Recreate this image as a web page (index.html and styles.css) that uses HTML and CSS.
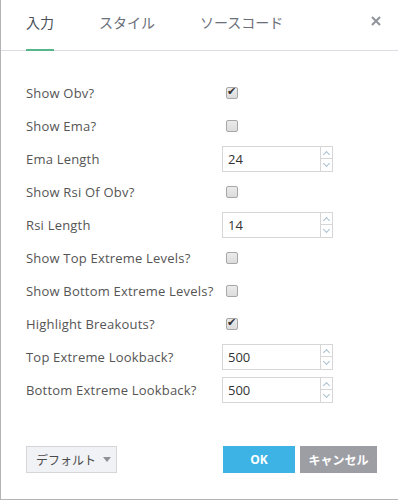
FILE: index.html
```html
<!doctype html>
<html lang="ja">
<head>
	<meta charset="UTF-8">
	<title>設定</title>
	<link rel="stylesheet" href="styles.css">
</head>
<body>
	<div class="dialog">
		<div class="tabs">
			<span class="tab active">入力</span>
			<span class="tab">スタイル</span>
			<span class="tab">ソースコード</span>
			<span class="close">
				<svg width="10" height="10" viewBox="0 0 10 10"><path d="M1 1L9 9M9 1L1 9" stroke="#8f939c" stroke-width="2"/></svg>
			</span>
		</div>

		<div class="content">
			<div class="row"><label>Show Obv?</label><span class="check on"></span></div>
			<div class="row"><label>Show Ema?</label><span class="check"></span></div>
			<div class="row"><label>Ema Length</label>
				<div class="num"><span class="val">24</span><span class="spin"><i class="up"></i><i class="down"></i></span></div>
			</div>
			<div class="row"><label>Show Rsi Of Obv?</label><span class="check"></span></div>
			<div class="row"><label>Rsi Length</label>
				<div class="num"><span class="val">14</span><span class="spin"><i class="up"></i><i class="down"></i></span></div>
			</div>
			<div class="row"><label>Show Top Extreme Levels?</label><span class="check"></span></div>
			<div class="row"><label>Show Bottom Extreme Levels?</label><span class="check"></span></div>
			<div class="row"><label>Highlight Breakouts?</label><span class="check on"></span></div>
			<div class="row"><label>Top Extreme Lookback?</label>
				<div class="num"><span class="val">500</span><span class="spin"><i class="up"></i><i class="down"></i></span></div>
			</div>
			<div class="row"><label>Bottom Extreme Lookback?</label>
				<div class="num"><span class="val">500</span><span class="spin"><i class="up"></i><i class="down"></i></span></div>
			</div>
		</div>

		<div class="footer">
			<a href="javascript:;" class="btn default">デフォルト<span class="caret"></span></a>
			<div class="actions">
				<a href="javascript:;" class="btn ok">OK</a>
				<a href="javascript:;" class="btn cancel">キャンセル</a>
			</div>
		</div>
	</div>
</body>
</html>
```

FILE: styles.css
```css
body{margin: 0;background-color: #fff;}
a{text-decoration: none;}
.dialog{
	width: 397px;
	height: 499px;
	border-left: 1px solid #b4b4b4;
	border-bottom: 1px solid #b4b4b4;
	background-color: #fff;
	font: 13px 'Open Sans', 'Noto Sans CJK JP', sans-serif;
	color: #4a4a4a;
	display: flex;
	flex-direction: column;
}
.tabs{
	height: 50px;
	border-bottom: 1px solid #dadde3;
	display: flex;
	align-items: stretch;
	padding-left: 25px;
	font: 14px 'Noto Sans CJK JP', sans-serif;
}
.tab{
	display: flex;
	align-items: center;
	padding-bottom: 6px;
	margin-right: 45px;
	color: #6a6e78;
	border-bottom: 2px solid transparent;
	margin-bottom: -1px;
}
.tab.active{
	color: #4a4f5a;
	border-bottom-color: #57b58a;
}
.close{
	margin-left: auto;
	margin-right: 17px;
	display: flex;
	align-items: center;
	padding-bottom: 8px;
}
.content{
	padding: 25px 0 0 25px;
}
.row{
	height: 33px;
	display: flex;
	align-items: center;
}
.row label{
	width: 196px;
	flex: none;
	color: #555;
	letter-spacing: 0.2px;
}
.check{
	width: 10px;
	height: 10px;
	margin-left: 4px;
	border: 1px solid #a7a7a7;
	border-radius: 2px;
	background: linear-gradient(#ebebeb, #dcdcdc);
	position: relative;
}
.check.on:after{
	content: '\2714';
	position: absolute;
	left: 0;
	top: -3px;
	font: 11px 'DejaVu Sans', sans-serif;
	color: #333;
}
.num{
	width: 109px;
	height: 24px;
	border: 1px solid #d6d6d6;
	display: flex;
}
.num .val{
	flex: 1;
	padding-left: 5px;
	display: flex;
	align-items: center;
	color: #333;
}
.spin{
	width: 11px;
	border-left: 1px solid #d6d6d6;
	display: flex;
	flex-direction: column;
}
.spin i{
	flex: 1;
	position: relative;
}
.spin .up{border-bottom: 1px solid #d6d6d6;}
.spin i:after{
	content: '';
	position: absolute;
	left: 3px;
	width: 4px;
	height: 4px;
	border-left: 1px solid #a9bfce;
	border-top: 1px solid #a9bfce;
}
.spin .up:after{top: 5px;transform: rotate(45deg);}
.spin .down:after{top: 2px;transform: rotate(225deg);}
.footer{
	margin-top: auto;
	margin-bottom: 26px;
	padding: 0 21px 0 25px;
	display: flex;
	justify-content: space-between;
}
.btn{
	height: 27px;
	display: flex;
	align-items: center;
	justify-content: center;
	font: 12px 'Noto Sans CJK JP', sans-serif;
}
.default{
	width: 80px;
	height: 25px;
	padding-left: 9px;
	justify-content: flex-start;
	border: 1px solid #d6d6d8;
	background-color: #f1f2f5;
	color: #4a4a4a;
}
.caret{
	margin-left: 7px;
	border-left: 4px solid transparent;
	border-right: 4px solid transparent;
	border-top: 5px solid #8e9096;
}
.actions{
	display: flex;
	gap: 5px;
}
.ok{
	width: 72px;
	background-color: #3cb3e4;
	color: #fff;
	font-weight: bold;
	font-family: 'Open Sans', sans-serif;
}
.cancel{
	width: 77px;
	background-color: #9c9ea4;
	color: #fff;
	font-weight: bold;
}
```
